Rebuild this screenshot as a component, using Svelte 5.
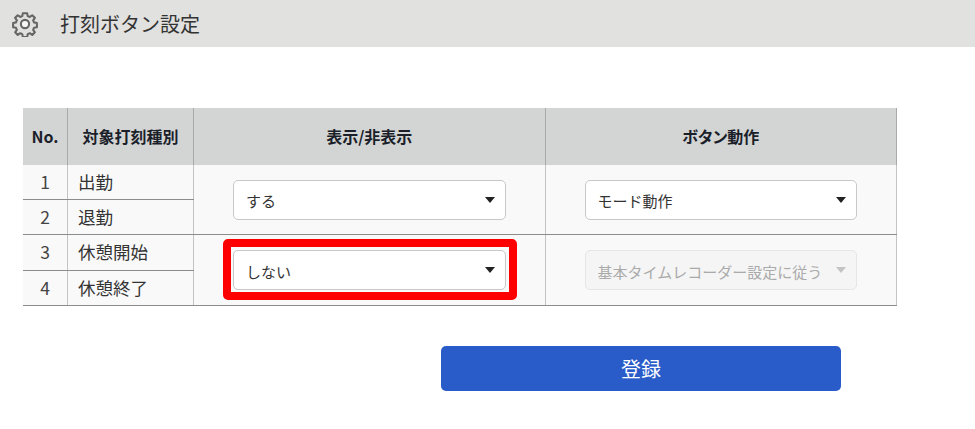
<script lang="ts">
	const rows = [
		{ no: 1, label: '出勤' },
		{ no: 2, label: '退勤' },
		{ no: 3, label: '休憩開始' },
		{ no: 4, label: '休憩終了' }
	];

	let showIn = $state('する');
	let showBreak = $state('しない');
	let inMode = $state('モード動作');
</script>

{#snippet pick(value: string, options: string[], disabled = false)}
	<div class="pick" class:off={disabled}>
		<select {value} {disabled}>
			{#each options as o}
				<option>{o}</option>
			{/each}
		</select>
		<span class="caret"></span>
	</div>
{/snippet}

<header>
	<svg class="gear" viewBox="0 0 24 24" width="26" height="26" fill="none" stroke="#666664" stroke-width="1.9" stroke-linejoin="round">
		<path d="M10 2h4l.5 2.7 1.9.8 2.3-1.6 2.4 2.4-1.6 2.3.8 1.9 2.7.5v4l-2.7.5-.8 1.9 1.6 2.3-2.4 2.4-2.3-1.6-1.9.8-.5 2.7h-4l-.5-2.7-1.9-.8-2.3 1.6-2.4-2.4 1.6-2.3-.8-1.9-2.7-.5v-4l2.7-.5.8-1.9-1.6-2.3 2.4-2.4 2.3 1.6 1.9-.8z" />
		<circle cx="12" cy="12" r="3.8" fill="#f6f6f6" />
	</svg>
	<h1>打刻ボタン設定</h1>
</header>

<main>
	<table>
		<thead>
			<tr>
				<th class="no">No.</th>
				<th class="kind">対象打刻種別</th>
				<th class="wide">表示/非表示</th>
				<th class="wide">ボタン動作</th>
			</tr>
		</thead>
		<tbody>
			{#each rows as row, i}
				<tr>
					<td class="num">{row.no}</td>
					<td class="name">{row.label}</td>
					{#if i === 0}
						<td class="ctl" rowspan="2">{@render pick(showIn, ['する', 'しない'])}</td>
						<td class="ctl" rowspan="2">{@render pick(inMode, ['モード動作', '基本タイムレコーダー設定に従う'])}</td>
					{:else if i === 2}
						<td class="ctl" rowspan="2">
							<div class="marked">{@render pick(showBreak, ['する', 'しない'])}</div>
						</td>
						<td class="ctl" rowspan="2">{@render pick('基本タイムレコーダー設定に従う', ['基本タイムレコーダー設定に従う'], true)}</td>
					{/if}
				</tr>
			{/each}
		</tbody>
	</table>

	<div class="actions">
		<button type="button">登録</button>
	</div>
</main>

<style>
	:global(body) {
		margin: 0;
		background: #fff;
		font-family: 'Noto Sans CJK JP', 'Noto Sans', sans-serif;
		color: #333;
	}

	header {
		display: flex;
		align-items: center;
		gap: 22px;
		height: 47px;
		padding-left: 12px;
		background: #e1e1df;
	}

	.gear {
		flex: none;
		margin-top: 1px;
	}

	h1 {
		margin: 0;
		font-size: 20px;
		font-weight: 400;
		color: #333;
	}

	main {
		padding: 61px 0 0 23px;
	}

	table {
		width: 874px;
		table-layout: fixed;
		border-collapse: collapse;
		font-size: 17.5px;
	}

	th {
		height: 55px;
		padding: 0 0 2px;
		background: #d3d5d5;
		border-left: 1px solid #a9abab;
		font-size: 16px;
		font-weight: 700;
		font-feature-settings: 'palt';
		color: #1b1f2a;
		text-align: center;
	}

	th:first-child {
		border-left: none;
	}

	th:last-child {
		border-right: 1px solid #a9abab;
	}

	.no {
		width: 44px;
	}

	.kind {
		width: 125px;
	}

	td {
		height: 32px;
		padding: 0;
		background: #f9f9f9;
		border-bottom: 1px solid #8c8c8c;
		border-left: 1px solid #c4c4c4;
	}

	tr:nth-child(3) td {
		height: 33px;
	}

	td:first-child {
		border-left: none;
	}

	td:last-child {
		border-right: 1px solid #c4c4c4;
	}

	.num,
	.name {
		padding-bottom: 2px;
	}

	.num {
		text-align: center;
		color: #444;
	}

	.name {
		padding-left: 10px;
		color: #333;
	}

	td.ctl {
		padding: 0 39px;
	}

	.pick {
		position: relative;
		height: 40px;
	}

	select {
		display: block;
		width: 100%;
		height: 100%;
		padding: 2px 30px 0 12px;
		appearance: none;
		background: #fff;
		border: 1px solid #c8c8c8;
		border-radius: 5px;
		font: inherit;
		font-size: 15px;
		color: #333;
	}

	select:disabled {
		opacity: 1;
		background: #f5f5f5;
		border-color: #e6e6e6;
		color: #aaa;
	}

	.caret {
		position: absolute;
		top: 17px;
		right: 11px;
		width: 0;
		height: 0;
		border-left: 5px solid transparent;
		border-right: 5px solid transparent;
		border-top: 6px solid #222;
		pointer-events: none;
	}

	.off .caret {
		border-top-color: #c4c4c4;
	}

	.marked {
		position: relative;
	}

	/* annotation frame drawn over the cell */
	.marked::after {
		content: '';
		position: absolute;
		inset: -11px -11px -10px -10px;
		border: 8px solid #f00;
		border-radius: 5px;
		pointer-events: none;
	}

	.actions {
		padding: 40px 0 0 418px;
	}

	button {
		display: block;
		width: 400px;
		height: 45px;
		background: #295cc9;
		border: none;
		border-radius: 5px;
		font: inherit;
		font-size: 20px;
		color: #fff;
	}
</style>
